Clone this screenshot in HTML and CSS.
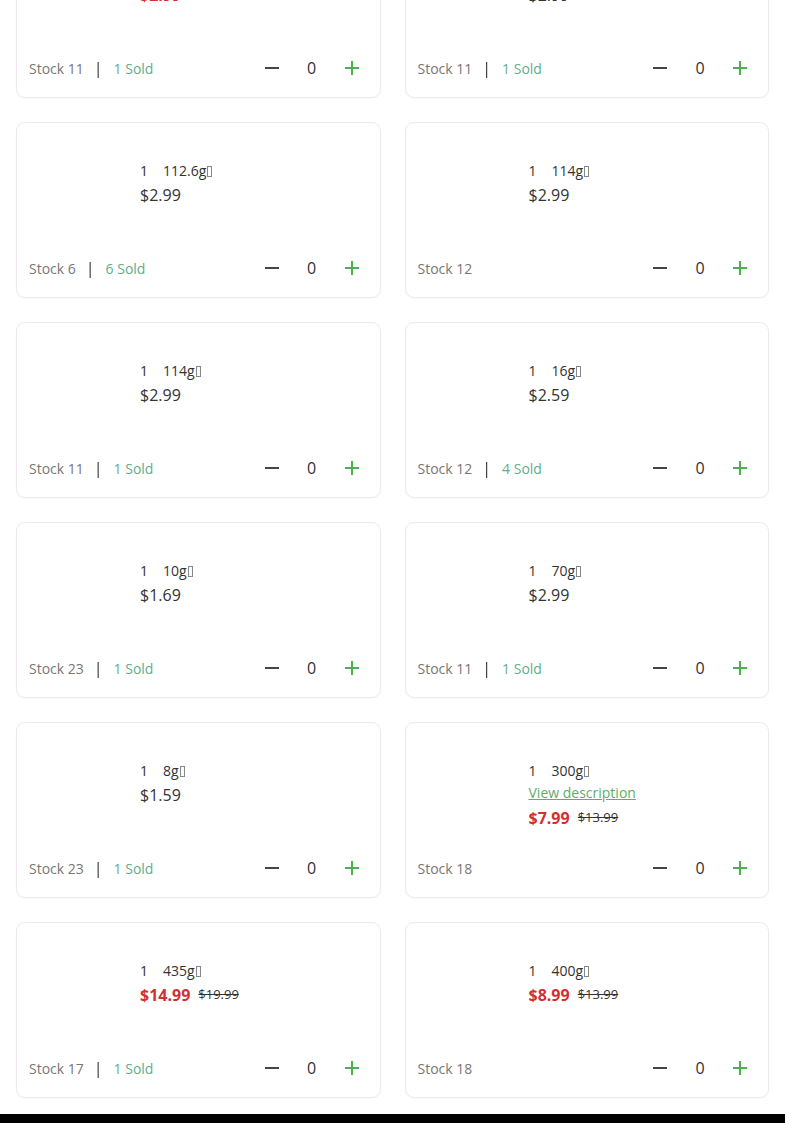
FILE: index.html
```html
<!DOCTYPE html>
<html lang="en">
<head>
<meta charset="utf-8">
<title>Products</title>
<link rel="stylesheet" href="styles.css">
</head>
<body>
<div class="page">
  <div class="grid">
    <div class="card">
      <div class="main"><div class="thumb"></div><div class="info">
        <div class="spec"><span class="qty">1</span>100g<span class="tofu"></span></div>
        <div class="price"><span class="sale">$2.99</span><span class="old">$3.99</span></div>
      </div></div>
      <div class="foot"><div class="stock">Stock 11<span class="sep">|</span><span class="sold">1 Sold</span></div><div class="ctrl"><span class="minus"></span><span class="count">0</span><span class="plus"></span></div></div>
    </div>
    <div class="card">
      <div class="main"><div class="thumb"></div><div class="info">
        <div class="spec"><span class="qty">1</span>100g<span class="tofu"></span></div>
        <div class="price">$2.99</div>
      </div></div>
      <div class="foot"><div class="stock">Stock 11<span class="sep">|</span><span class="sold">1 Sold</span></div><div class="ctrl"><span class="minus"></span><span class="count">0</span><span class="plus"></span></div></div>
    </div>

    <div class="card">
      <div class="main"><div class="thumb"></div><div class="info">
        <div class="spec"><span class="qty">1</span>112.6g<span class="tofu"></span></div>
        <div class="price">$2.99</div>
      </div></div>
      <div class="foot"><div class="stock">Stock 6<span class="sep">|</span><span class="sold">6 Sold</span></div><div class="ctrl"><span class="minus"></span><span class="count">0</span><span class="plus"></span></div></div>
    </div>
    <div class="card">
      <div class="main"><div class="thumb"></div><div class="info">
        <div class="spec"><span class="qty">1</span>114g<span class="tofu"></span></div>
        <div class="price">$2.99</div>
      </div></div>
      <div class="foot"><div class="stock">Stock 12</div><div class="ctrl"><span class="minus"></span><span class="count">0</span><span class="plus"></span></div></div>
    </div>

    <div class="card">
      <div class="main"><div class="thumb"></div><div class="info">
        <div class="spec"><span class="qty">1</span>114g<span class="tofu"></span></div>
        <div class="price">$2.99</div>
      </div></div>
      <div class="foot"><div class="stock">Stock 11<span class="sep">|</span><span class="sold">1 Sold</span></div><div class="ctrl"><span class="minus"></span><span class="count">0</span><span class="plus"></span></div></div>
    </div>
    <div class="card">
      <div class="main"><div class="thumb"></div><div class="info">
        <div class="spec"><span class="qty">1</span>16g<span class="tofu"></span></div>
        <div class="price">$2.59</div>
      </div></div>
      <div class="foot"><div class="stock">Stock 12<span class="sep">|</span><span class="sold">4 Sold</span></div><div class="ctrl"><span class="minus"></span><span class="count">0</span><span class="plus"></span></div></div>
    </div>

    <div class="card">
      <div class="main"><div class="thumb"></div><div class="info">
        <div class="spec"><span class="qty">1</span>10g<span class="tofu"></span></div>
        <div class="price">$1.69</div>
      </div></div>
      <div class="foot"><div class="stock">Stock 23<span class="sep">|</span><span class="sold">1 Sold</span></div><div class="ctrl"><span class="minus"></span><span class="count">0</span><span class="plus"></span></div></div>
    </div>
    <div class="card">
      <div class="main"><div class="thumb"></div><div class="info">
        <div class="spec"><span class="qty">1</span>70g<span class="tofu"></span></div>
        <div class="price">$2.99</div>
      </div></div>
      <div class="foot"><div class="stock">Stock 11<span class="sep">|</span><span class="sold">1 Sold</span></div><div class="ctrl"><span class="minus"></span><span class="count">0</span><span class="plus"></span></div></div>
    </div>

    <div class="card">
      <div class="main"><div class="thumb"></div><div class="info">
        <div class="spec"><span class="qty">1</span>8g<span class="tofu"></span></div>
        <div class="price">$1.59</div>
      </div></div>
      <div class="foot"><div class="stock">Stock 23<span class="sep">|</span><span class="sold">1 Sold</span></div><div class="ctrl"><span class="minus"></span><span class="count">0</span><span class="plus"></span></div></div>
    </div>
    <div class="card">
      <div class="main"><div class="thumb"></div><div class="info">
        <div class="spec"><span class="qty">1</span>300g<span class="tofu"></span></div>
        <a class="desc" href="#">View description</a>
        <div class="price price-after-desc"><span class="sale">$7.99</span><span class="old">$13.99</span></div>
      </div></div>
      <div class="foot"><div class="stock">Stock 18</div><div class="ctrl"><span class="minus"></span><span class="count">0</span><span class="plus"></span></div></div>
    </div>

    <div class="card">
      <div class="main"><div class="thumb"></div><div class="info">
        <div class="spec"><span class="qty">1</span>435g<span class="tofu"></span></div>
        <div class="price"><span class="sale">$14.99</span><span class="old">$19.99</span></div>
      </div></div>
      <div class="foot"><div class="stock">Stock 17<span class="sep">|</span><span class="sold">1 Sold</span></div><div class="ctrl"><span class="minus"></span><span class="count">0</span><span class="plus"></span></div></div>
    </div>
    <div class="card">
      <div class="main"><div class="thumb"></div><div class="info">
        <div class="spec"><span class="qty">1</span>400g<span class="tofu"></span></div>
        <div class="price"><span class="sale">$8.99</span><span class="old">$13.99</span></div>
      </div></div>
      <div class="foot"><div class="stock">Stock 18</div><div class="ctrl"><span class="minus"></span><span class="count">0</span><span class="plus"></span></div></div>
    </div>
  </div>
  <div class="footer"></div>
</div>
</body>
</html>
```
FILE: styles.css
```css
* { box-sizing: border-box; }
html, body { margin: 0; padding: 0; background: #fff; }
body {
  font-family: "Open Sans", "Liberation Sans", sans-serif;
  color: #333;
  overflow: hidden;
}
.page { margin-top: -78px; }
.grid {
  display: grid;
  grid-template-columns: 1fr 1fr;
  column-gap: 24px;
  row-gap: 24px;
  padding: 0 16px 16px;
}
.card {
  height: 176px;
  border: 1px solid #ebebeb;
  border-radius: 9px;
  box-shadow: 0 1px 2px rgba(0,0,0,0.03);
  display: flex;
  flex-direction: column;
  padding: 0 12px;
  background: #fff;
}
.main {
  display: flex;
  gap: 12px;
  padding-top: 37px;
}
.thumb { width: 99px; flex: none; }
.info { display: flex; flex-direction: column; align-items: flex-start; }
.spec {
  font-size: 14px;
  line-height: 22px;
  color: #333;
  display: flex;
  align-items: center;
  margin-bottom: 1px;
}
.qty { display: inline-block; width: 23px; }
.tofu {
  display: inline-block;
  width: 5px;
  height: 11px;
  border: 1px solid #888;
  margin-left: 1px;
  margin-top: 1px;
}
.price {
  font-size: 16px;
  line-height: 24px;
  color: #333;
  display: flex;
  align-items: baseline;
}
.price-after-desc { margin-top: 2px; }
.sale { color: #d32f2f; font-weight: 700; }
.old {
  font-size: 13px;
  color: #333;
  text-decoration: line-through;
  margin-left: 8px;
  position: relative;
  top: -2px;
}
.desc {
  font-size: 14px;
  line-height: 22px;
  margin-top: -1px;
  color: #5fae63;
  text-decoration: underline;
}
.foot {
  margin-top: auto;
  margin-bottom: 17px;
  height: 24px;
  display: flex;
  align-items: center;
  justify-content: space-between;
}
.stock {
  font-size: 14px;
  color: #777;
  display: flex;
  align-items: center;
}
.sep {
  color: #333;
  font-size: 16px;
  margin: 0 11px 0 10px;
  transform: translateZ(0);
}
.sold { color: #5fae8d; }
.ctrl {
  display: flex;
  align-items: center;
  margin-right: 4px;
}
.minus, .plus {
  width: 24px;
  height: 24px;
  position: relative;
  display: inline-block;
}
.minus::before, .plus::before, .plus::after {
  content: "";
  position: absolute;
  left: 5px;
  top: 11px;
  width: 14px;
  height: 2px;
  background: #444;
}
.plus::before, .plus::after { background: #4caf50; }
.plus::after {
  left: 11px;
  top: 5px;
  width: 2px;
  height: 14px;
}
.count {
  font-size: 16px;
  min-width: 30px;
  text-align: center;
  margin: 0 13px 0 13px;
  color: #333;
}
.footer {
  height: 40px;
  background: #000;
}
```
